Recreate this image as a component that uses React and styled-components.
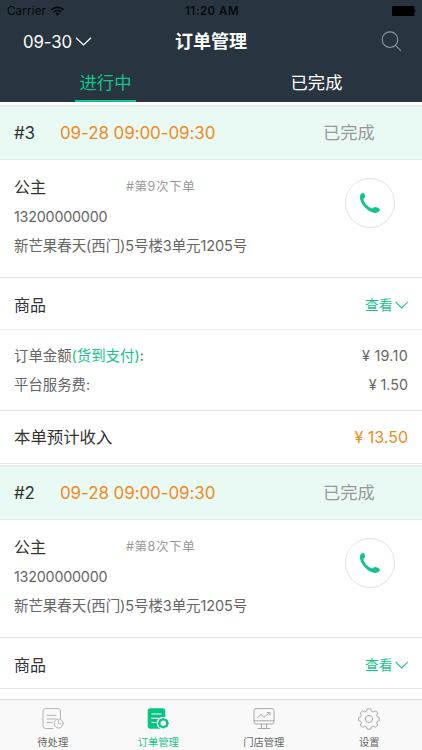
import React from "react";
import styled, { createGlobalStyle } from "styled-components";

const GlobalStyle = createGlobalStyle`
  * {
    box-sizing: border-box;
  }
  body {
    margin: 0;
    background: #fff;
    font-family: Inter, "Noto Sans CJK SC", sans-serif;
  }
`;

const Screen = styled.div`
  display: flex;
  flex-direction: column;
  width: 422px;
  height: 750px;
  overflow: hidden;
  background: #fff;
`;

//Every single line text uses this, so the glyph width can be tuned by size and spacing
const Text = styled.span`
  font-size: ${(props) => props.$size}px;
  font-weight: ${(props) => props.$weight || 400};
  letter-spacing: ${(props) => props.$spacing || 0}px;
  color: ${(props) => props.$color || "inherit"};
  line-height: ${(props) => props.$line || 24}px;
  white-space: nowrap;
`;

//Header
const Header = styled.header`
  flex: none;
  height: 102px;
  background: #283541;
  color: #fff;
`;
const StatusBar = styled.div`
  display: grid;
  grid-template-columns: 1fr auto 1fr;
  align-items: center;
  height: 22px;
  padding: 0 5px 0 7px;
  color: #05080a;
`;
const Carrier = styled.div`
  display: flex;
  align-items: center;
  gap: 5px;
`;
const Battery = styled.svg`
  justify-self: end;
`;
const NavBar = styled.div`
  display: grid;
  grid-template-columns: 1fr auto 1fr;
  align-items: center;
  height: 40px;
  padding: 0 20px 1px;
`;
const DatePicker = styled.div`
  display: flex;
  align-items: center;
  gap: 3px;
  padding-left: 3px;
`;
const SearchIcon = styled.svg`
  justify-self: end;
`;
const Tabs = styled.div`
  display: grid;
  grid-template-columns: 1fr 1fr;
  justify-items: center;
  height: 40px;
`;
const Tab = styled.div`
  display: flex;
  align-items: center;
  justify-content: center;
  width: 61px;
  height: 40px;
  padding-top: 3px;
  border-bottom: 2px solid ${(props) => (props.$active ? "#13c487" : "transparent")};
  color: ${(props) => (props.$active ? "#13c487" : "#fff")};
`;

//Order list
const OrderList = styled.main`
  flex: 1;
  min-height: 0;
  padding-top: 3px;
  overflow: hidden;
`;
const Order = styled.section`
  border-top: 2px solid #e6edeb;
`;
const OrderHead = styled.div`
  display: grid;
  grid-template-columns: 46px 1fr 99px;
  align-items: center;
  height: 53px;
  padding-left: 14px;
  background: #e9faf5;
  border-bottom: 1px solid #e4efec;
`;
const Contact = styled.div`
  display: flex;
  justify-content: space-between;
  height: 118px;
  padding: 15px 27px 0 14px;
  border-bottom: 1px solid #e4e4e4;
`;
const ContactInfo = styled.div`
  display: flex;
  flex-direction: column;
  color: #666;
`;
const NameRow = styled.div`
  display: grid;
  grid-template-columns: 112px auto;
  height: 30px;
`;
const Line = styled.div`
  display: flex;
  height: 29px;
`;
const CallButton = styled.div`
  display: flex;
  align-items: center;
  justify-content: center;
  width: 50px;
  height: 50px;
  margin-top: 3px;
  border: 1px solid #e2e2e2;
  border-radius: 50%;
`;
const Row = styled.div`
  display: flex;
  align-items: center;
  justify-content: space-between;
  height: ${(props) => props.$height}px;
  padding: ${(props) => props.$top || 0}px 14px 0;
  border-bottom: 1px solid ${(props) => props.$line};
`;
const ViewLink = styled.div`
  display: flex;
  align-items: center;
  gap: 2px;
  color: #13c487;
`;
const Amounts = styled.div`
  height: 81px;
  padding: 14px 14px 0;
  border-bottom: 1px solid #e4e4e4;
  color: #666;
`;
const AmountRow = styled.div`
  display: flex;
  justify-content: space-between;
  height: 29px;
`;
const Income = styled.div`
  padding-bottom: 1px;
`;

//Bottom navigation
const Footer = styled.footer`
  display: grid;
  grid-template-columns: repeat(4, 1fr);
  flex: none;
  height: 51px;
  border-top: 1px solid #d9d9d9;
  background: #f9f9f9;
`;
const FooterItem = styled.div`
  display: flex;
  flex-direction: column;
  align-items: center;
  gap: 5px;
  padding-top: 8px;
  color: ${(props) => (props.$active ? "#13c487" : "#666")};
`;

const Chevron = ({ width, height }) => (
  <svg width={width} height={height} viewBox="0 0 16 9" fill="none" stroke="currentColor" strokeWidth="1.2">
    <path d="M.5.7 8 8 15.500.7" />
  </svg>
);

const PhoneIcon = () => (
  <svg width="22" height="22" viewBox="0 0 22 22" fill="#13c487">
    <path d="M2.900 1.300C4.200.500 5.400 1.300 5.800 3.100c.4 1.500.3 2.800-.9 3.500-.6.400-.5 1.200-.1 2.200 1.200 3 4 5.700 7.100 7.300 1 .5 1.700.5 2.200-.1 1-1.200 2.300-1.200 3.800-.6 1.900.8 3.700 1.500 2.900 3.100-1.200 2.300-4.500 3.100-7.800 1.700C7.300 17.800 2.500 12.800 1.200 7.300.600 4.700 1 2.400 2.900 1.300Z" />
  </svg>
);

const PendingIcon = () => (
  <svg width="22" height="22" viewBox="0 0 22 22" fill="none" stroke="#b5b5b5" strokeLinecap="round">
    <path d="M11 20.500H3.500a2.500 2.500 0 0 1-2.500-2.500V3A2.500 2.500 0 0 1 3.500.600H16A2.500 2.500 0 0 1 18.500 3v7.500" />
    <path d="M5 7.300h9M5 11h9M5 14.500h5" />
    <circle cx="16.700" cy="15.500" r="4.500" />
    <path d="M16.500 12.800v3h2.200" />
  </svg>
);

const OrdersIcon = () => (
  <svg width="22" height="22" viewBox="0 0 22 22">
    <path d="M3.500.300h12A2.800 2.800 0 0 1 18.300 3v16.500h-5.500l1 1.200H3.500A2.800 2.800 0 0 1 .700 18V3A2.800 2.800 0 0 1 3.500.300Z" fill="#06c681" />
    <path d="M4.500 6h10M4.500 10.300h8M4.500 14.500h5" stroke="#fff" strokeWidth="1.200" />
    <circle cx="16.300" cy="15.200" r="6.500" fill="#f9f9f9" />
    <path d="m16.300 9.800 1.500 1 2.700.7.600 2.200.9 1.500-.9 1.600-.6 2.200-2.700.7-1.500 1-1.500-1-2.700-.7-.6-2.200-.9-1.600.9-1.500.6-2.200 2.700-.7Z" fill="#06c681" />
    <path d="m16.300 12.200 2.700 1.500v3.100l-2.700 1.500-2.700-1.500v-3.100Z" fill="#f9f9f9" />
  </svg>
);

const StoreIcon = () => (
  <svg width="22" height="22" viewBox="0 0 22 22" fill="none" stroke="#a8a8a8" strokeLinecap="round">
    <rect x="1" y=".600" width="20" height="15.400" rx="2" />
    <path d="M1 12.800h20M8.500 16v4.300M13.500 16v4.300M5 20.500h12" />
    <path d="m4.500 9.700 3.500-3.200 3 2.700L16.500 5M14.300 4.500h2.700V7" />
  </svg>
);

const SettingsIcon = () => (
  <svg width="22" height="22" viewBox="0 0 22 22" fill="none" stroke="#a8a8a8" strokeLinejoin="round">
    <path d="M9.300.800h3.400l.7 2.400 1.800.8 2.300-1.200 2.300 2.300L18.600 7.400l.7 1.500 2 .6v3.200l-2 .6-.7 1.600 1.200 2.200-2.300 2.300-2.300-1.200-1.800.8-.7 2.200H9.300l-.7-2.200-1.800-.8-2.300 1.200-2.300-2.300 1.200-2.200-.7-1.600-2-.6V9.500l2-.6.700-1.500L2.200 5.100l2.300-2.300L6.800 4l1.800-.8Z" />
    <circle cx="11" cy="11" r="3.600" />
  </svg>
);

const orders = [
  { id: "#3", times: "#第9次下单", bill: { total: "19.10", fee: "1.50", income: "13.50" } },
  { id: "#2", times: "#第8次下单" },
];

//The bill part is only shown when the order has one
const OrderComponent = ({ id, times, bill }) => {
  return (
    <Order>
      <OrderHead>
        <Text $size={17} $spacing={-0.2} $color="#333">{id}</Text>
        <Text $size={17} $spacing={-0.1} $color="#f08a1d">09-28 09:00-09:30</Text>
        <Text $size={17.300} $color="#999">已完成</Text>
      </OrderHead>
      <Contact>
        <ContactInfo>
          <NameRow>
            <Text $size={16} $color="#333">公主</Text>
            <Text $size={12.500} $spacing={0.6} $color="#999">{times}</Text>
          </NameRow>
          <Line>
            <Text $size={14.300} $spacing={-0.2}>13200000000</Text>
          </Line>
          <Line>
            <Text $size={14.500} $spacing={-0.09}>新芒果春天(西门)5号楼3单元1205号</Text>
          </Line>
        </ContactInfo>
        <CallButton>
          <PhoneIcon />
        </CallButton>
      </Contact>
      <Row $height={bill ? 52 : 51} $top={3} $line={bill ? "#f1f1f1" : "#e4e4e4"}>
        <Text $size={16} $color="#333">商品</Text>
        <ViewLink>
          <Text $size={13.800}>查看</Text>
          <Chevron width="13.500" height="8" />
        </ViewLink>
      </Row>
      {bill && (
        <>
          <Amounts>
            <AmountRow>
              <Text $size={14.400}>
                订单金额<Text $size={14.400} $color="#13c487">(货到支付)</Text>:
              </Text>
              <Text $size={14.300} $spacing={0.3}>¥ {bill.total}</Text>
            </AmountRow>
            <AmountRow>
              <Text $size={14.400}>平台服务费:</Text>
              <Text $size={14.300}>¥ {bill.fee}</Text>
            </AmountRow>
          </Amounts>
          <Income>
            <Row $height={53} $line="#e8e8e8">
              <Text $size={16.400} $color="#333">本单预计收入</Text>
              <Text $size={16} $color="#f08a1d">¥ {bill.income}</Text>
            </Row>
          </Income>
        </>
      )}
    </Order>
  );
};

const App = () => {
  return (
    <Screen>
      <GlobalStyle />
      <Header>
        <StatusBar>
          <Carrier>
            <Text $size={11.500} $spacing={0.2} $line={16}>Carrier</Text>
            <svg width="13" height="10" viewBox="0 0 13 10" fill="none" stroke="currentColor" strokeWidth="1.700">
              <path d="M.6 3.700a8.500 8.500 0 0 1 11.800 0M2.700 6a5.500 5.500 0 0 1 7.600 0" />
              <path d="M4.500 7.500a3 3 0 0 1 4 0l-2 2.200Z" fill="currentColor" stroke="none" />
            </svg>
          </Carrier>
          <Text $size={11.500} $weight={600} $spacing={0.5} $line={16}>11:20 AM</Text>
          <Battery width="26" height="10" viewBox="0 0 26 10" fill="#000">
            <rect x="1" width="22.500" height="10" rx="1.500" />
            <path d="M24.300 3.300q1.500 1.700 0 3.400Z" />
          </Battery>
        </StatusBar>
        <NavBar>
          <DatePicker>
            <Text $size={16.800} $spacing={-0.1}>09-30</Text>
            <Chevron width="17" height="9" />
          </DatePicker>
          <Text $size={18} $weight={700}>订单管理</Text>
          <SearchIcon width="21" height="21" viewBox="0 0 21 21" fill="none" stroke="#8a939a" strokeWidth="1.200">
            <circle cx="9" cy="8.700" r="7.800" />
            <path d="m14.500 14.300 5.500 5.500" />
          </SearchIcon>
        </NavBar>
        <Tabs>
          <Tab $active>
            <Text $size={17.300}>进行中</Text>
          </Tab>
          <Tab>
            <Text $size={17.300}>已完成</Text>
          </Tab>
        </Tabs>
      </Header>
      <OrderList>
        {orders.map((order) => (
          <OrderComponent key={order.id} {...order} />
        ))}
      </OrderList>
      <Footer>
        <FooterItem>
          <PendingIcon />
          <Text $size={10.300} $line={15}>待处理</Text>
        </FooterItem>
        <FooterItem $active>
          <OrdersIcon />
          <Text $size={10.300} $line={15}>订单管理</Text>
        </FooterItem>
        <FooterItem>
          <StoreIcon />
          <Text $size={10.300} $line={15}>门店管理</Text>
        </FooterItem>
        <FooterItem>
          <SettingsIcon />
          <Text $size={10.300} $line={15}>设置</Text>
        </FooterItem>
      </Footer>
    </Screen>
  );
};

export default App;
